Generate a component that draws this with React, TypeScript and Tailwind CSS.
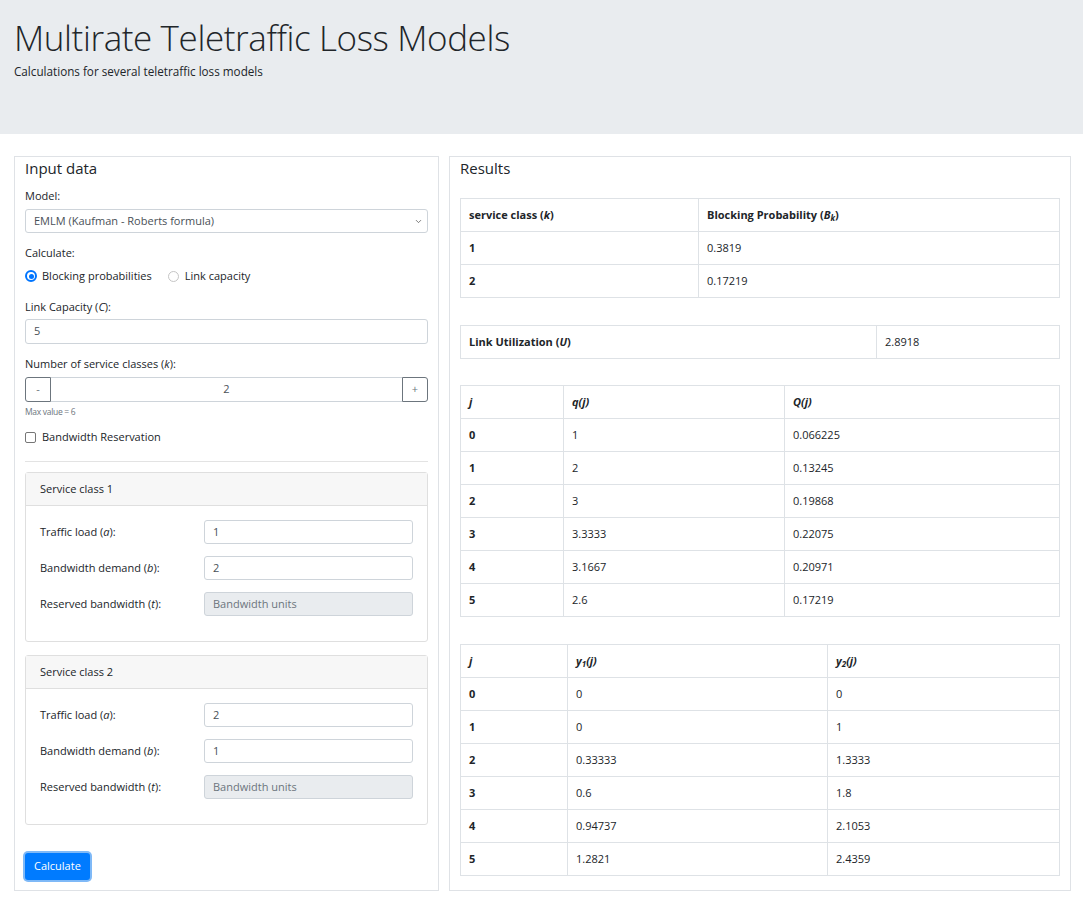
import { ChevronDown } from 'lucide-react';

const sc = [
  { a: '1', b: '2' },
  { a: '2', b: '1' },
];

const qRows = [
  ['0', '1', '0.066225'],
  ['1', '2', '0.13245'],
  ['2', '3', '0.19868'],
  ['3', '3.3333', '0.22075'],
  ['4', '3.1667', '0.20971'],
  ['5', '2.6', '0.17219'],
];

const yRows = [
  ['0', '0', '0'],
  ['1', '0', '1'],
  ['2', '0.33333', '1.3333'],
  ['3', '0.6', '1.8'],
  ['4', '0.94737', '2.1053'],
  ['5', '1.2821', '2.4359'],
];

function ServiceClass({ n, a, b }: { n: number; a: string; b: string }) {
  return (
    <div className="rounded-[3px] border border-[#dfdfdf]">
      <div className="flex h-[33px] items-center border-b border-[#dfdfdf] bg-[#f7f7f7] px-[14px]">
        Service class {n}
      </div>
      <div className="flex flex-col gap-[12px] px-[14px] pt-[14px] pb-[25px]">
        <div className="flex items-center">
          <span className="w-[164px]">
            Traffic load (<i>a</i>):
          </span>
          <div className="flex h-[24px] flex-1 items-center rounded-[3px] border border-[#ced4da] px-[8px] text-[#495057]">
            {a}
          </div>
        </div>
        <div className="flex items-center">
          <span className="w-[164px]">
            Bandwidth demand (<i>b</i>):
          </span>
          <div className="flex h-[24px] flex-1 items-center rounded-[3px] border border-[#ced4da] px-[8px] text-[#495057]">
            {b}
          </div>
        </div>
        <div className="flex items-center">
          <span className="w-[164px]">
            Reserved bandwidth (<i>t</i>):
          </span>
          <div className="flex h-[24px] flex-1 items-center rounded-[3px] border border-[#ced4da] bg-[#e9ecef] px-[8px] text-[#6c757d]">
            Bandwidth units
          </div>
        </div>
      </div>
    </div>
  );
}

export default function App() {
  return (
    <div className="min-h-screen bg-white font-['Open_Sans',sans-serif] text-[11px] text-[#212529]">
      {/* Header */}
      <div className="h-[134px] bg-[#e9ecef] px-[14px] pt-[14px]">
        <h1 className="text-[35px] leading-[48px] font-light tracking-[-0.4px]">Multirate Teletraffic Loss Models</h1>
        <p className="mt-[1px] text-[11.7px]">Calculations for several teletraffic loss models</p>
      </div>

      <div className="flex items-start gap-[10px] pt-[22px] pr-[11px] pl-[14px]">
        {/* Input card */}
        <div className="w-[425px] shrink-0 border border-[#dfe2e6] px-[10px] pb-[10px]">
          <h5 className="flex h-[22px] items-center text-[15px]">Input data</h5>

          <div className="mt-[8px] flex h-[18px] items-center">Model:</div>
          <div className="mt-[4px] flex h-[24px] items-center justify-between rounded-[3px] border border-[#ced4da] pr-[4px] pl-[8px] text-[#495057]">
            <span>EMLM (Kaufman - Roberts formula)</span>
            <ChevronDown className="h-[9px] w-[9px] text-[#555]" strokeWidth={2} />
          </div>

          <div className="mt-[11px] flex h-[18px] items-center">Calculate:</div>
          <div className="mt-[5px] flex h-[18px] items-center">
            <span className="flex h-[12px] w-[12px] items-center justify-center rounded-full border-2 border-[#0075ff]">
              <span className="h-[5px] w-[5px] rounded-full bg-[#0075ff]" />
            </span>
            <span className="ml-[5px]">Blocking probabilities</span>
            <span className="ml-[16px] h-[11px] w-[11px] rounded-full border border-[#c5c5c5]" />
            <span className="ml-[6px]">Link capacity</span>
          </div>

          <div className="mt-[13px] flex h-[18px] items-center">
            Link Capacity (<i>C</i>):
          </div>
          <div className="mt-[3px] flex h-[25px] items-center rounded-[3px] border border-[#ced4da] px-[8px] text-[#495057]">
            5
          </div>

          <div className="mt-[11px] flex h-[18px] items-center">
            Number of service classes (<i>k</i>):
          </div>
          <div className="mt-[4px] flex h-[25px]">
            <div className="flex w-[26px] items-center justify-center rounded-l-[3px] border border-[#6c757d] text-[#6c757d]">
              -
            </div>
            <div className="flex flex-1 items-center justify-center border-y border-[#ced4da] text-[#495057]">
              2
            </div>
            <div className="flex w-[26px] items-center justify-center rounded-r-[3px] border border-[#6c757d] text-[#6c757d]">
              +
            </div>
          </div>
          <div className="mt-[4px] flex h-[12px] items-center text-[8.5px] tracking-[-0.3px] text-[#6c757d]">
            Max value = 6
          </div>

          <div className="mt-[10px] flex h-[18px] items-center">
            <span className="h-[11px] w-[11px] rounded-[2px] border border-[#767676]" />
            <span className="ml-[6px]">Bandwidth Reservation</span>
          </div>

          <div className="mt-[15px] border-t border-[#e3e3e3]" />

          <div className="mt-[10px] flex flex-col gap-[13px]">
            {sc.map((s, i) => (
              <ServiceClass key={i} n={i + 1} a={s.a} b={s.b} />
            ))}
          </div>

          <button className="mt-[28px] flex h-[27px] items-center rounded-[3px] bg-[#007bff] px-[9px] text-white ring-2 ring-[#7fb9f7]">
            Calculate
          </button>
        </div>

        {/* Results card */}
        <div className="w-[622px] shrink-0 border border-[#dfe2e6] px-[10px] pb-[14px]">
          <h5 className="flex h-[22px] items-center text-[15px]">Results</h5>

          <table className="mt-[19px] w-full border-collapse">
            <tbody>
              <tr>
                <th className="h-[33px] w-[238px] border border-[#dee2e6] px-[8px] text-left font-bold">
                  service class (<i>k</i>)
                </th>
                <th className="h-[33px] border border-[#dee2e6] px-[8px] text-left font-bold">
                  Blocking Probability (<i>B<sub className="text-[8px]">k</sub></i>)
                </th>
              </tr>
              <tr>
                <th className="h-[33px] border border-[#dee2e6] px-[8px] text-left font-bold">1</th>
                <td className="h-[33px] border border-[#dee2e6] px-[8px]">0.3819</td>
              </tr>
              <tr>
                <th className="h-[33px] border border-[#dee2e6] px-[8px] text-left font-bold">2</th>
                <td className="h-[33px] border border-[#dee2e6] px-[8px]">0.17219</td>
              </tr>
            </tbody>
          </table>

          <table className="mt-[27px] w-full border-collapse">
            <tbody>
              <tr>
                <th className="h-[33px] w-[416px] border border-[#dee2e6] px-[8px] text-left font-bold">
                  Link Utilization (<i>U</i>)
                </th>
                <td className="h-[33px] border border-[#dee2e6] px-[8px]">2.8918</td>
              </tr>
            </tbody>
          </table>

          <table className="mt-[26px] w-full border-collapse">
            <tbody>
              <tr>
                <th className="h-[33px] w-[103px] border border-[#dee2e6] px-[8px] text-left font-bold italic">j</th>
                <th className="h-[33px] w-[221px] border border-[#dee2e6] px-[8px] text-left font-bold italic">q(j)</th>
                <th className="h-[33px] border border-[#dee2e6] px-[8px] text-left font-bold italic">Q(j)</th>
              </tr>
              {qRows.map((r) => (
                <tr key={r[0]}>
                  <th className="h-[33px] border border-[#dee2e6] px-[8px] text-left font-bold">{r[0]}</th>
                  <td className="h-[33px] border border-[#dee2e6] px-[8px]">{r[1]}</td>
                  <td className="h-[33px] border border-[#dee2e6] px-[8px]">{r[2]}</td>
                </tr>
              ))}
            </tbody>
          </table>

          <table className="mt-[27px] w-full border-collapse">
            <tbody>
              <tr>
                <th className="h-[33px] w-[107px] border border-[#dee2e6] px-[8px] text-left font-bold italic">j</th>
                <th className="h-[33px] w-[260px] border border-[#dee2e6] px-[8px] text-left font-bold italic">
                  y<sub className="text-[8px]">1</sub>(j)
                </th>
                <th className="h-[33px] border border-[#dee2e6] px-[8px] text-left font-bold italic">
                  y<sub className="text-[8px]">2</sub>(j)
                </th>
              </tr>
              {yRows.map((r) => (
                <tr key={r[0]}>
                  <th className="h-[33px] border border-[#dee2e6] px-[8px] text-left font-bold">{r[0]}</th>
                  <td className="h-[33px] border border-[#dee2e6] px-[8px]">{r[1]}</td>
                  <td className="h-[33px] border border-[#dee2e6] px-[8px]">{r[2]}</td>
                </tr>
              ))}
            </tbody>
          </table>
        </div>
      </div>
    </div>
  );
}
